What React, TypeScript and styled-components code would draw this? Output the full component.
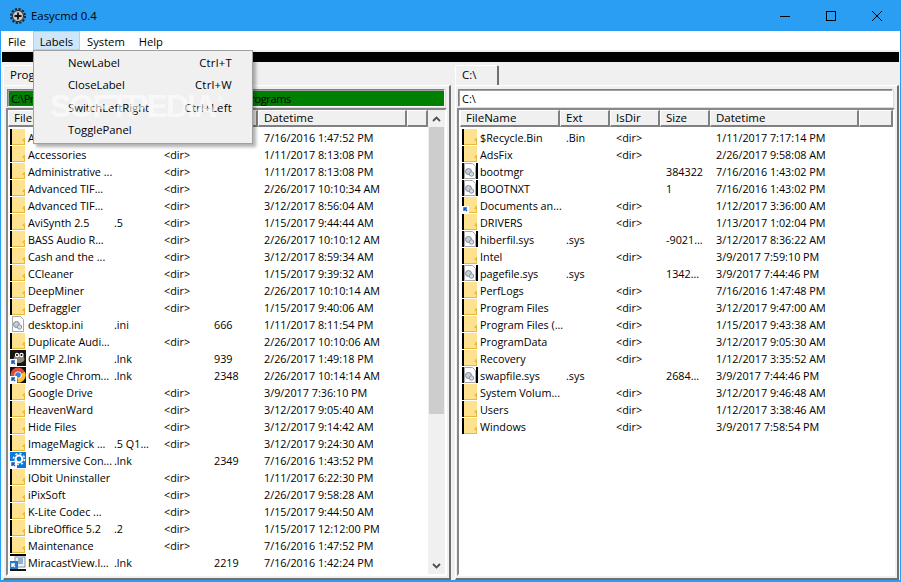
import React from "react";
import styled, { createGlobalStyle } from "styled-components";

const Global = createGlobalStyle`
  html, body { margin: 0; padding: 0; background: #f0f0f0; }
  body { width: 901px; height: 582px; overflow: hidden; font-family: "Open Sans", "Noto Sans", sans-serif; }
  #root { width: 901px; height: 582px; }
`;

const Win = styled.div`
  position: relative;
  box-sizing: border-box;
  width: 901px;
  height: 582px;
  border: 1px solid #2a9ef2;
  border-top: 0;
  border-bottom-width: 2px;
  background: #f0f0f0;
  display: flex;
  flex-direction: column;
  color: #000;
  font-size: 11px;
  overflow: hidden;
`;
const TitleBar = styled.div`
  height: 31px;
  flex: none;
  background: #2a9ef2;
  display: flex;
  align-items: center;
  padding-left: 9px;
  font-size: 11.4px;
`;
const TitleText = styled.span`
  margin-left: 5px;
  color: #000;
`;
const Controls = styled.div`
  margin-left: auto;
  display: flex;
  height: 100%;
`;
const Ctrl = styled.div`
  width: 46px;
  height: 31px;
  display: flex;
  align-items: center;
  justify-content: center;
`;
const MenuBar = styled.div`
  height: 19px;
  flex: none;
  background: #fff;
  display: flex;
  font-size: 11.2px;
  margin-bottom: 2px;
`;
const MenuItem = styled.div<{ $on?: boolean }>`
  box-sizing: border-box;
  height: 19px;
  padding: 0 6px;
  line-height: 19px;
  border: 1px solid ${(p) => (p.$on ? "#a8d3f2" : "transparent")};
  background: ${(p) => (p.$on ? "#cde6f9" : "transparent")};
`;
const BlackBar = styled.div`
  height: 10px;
  flex: none;
  background: #000;
  margin: 0 1px;
`;
const Body = styled.div`
  flex: 1;
  min-height: 0;
  display: flex;
  padding-right: 1px;
`;
const Panel = styled.div<{ $w: number; $padL: number }>`
  width: ${(p) => p.$w}px;
  flex: none;
  box-sizing: border-box;
  display: flex;
  flex-direction: column;
  padding: 3px 0 0 ${(p) => p.$padL}px;
`;
const Tab = styled.div`
  box-sizing: border-box;
  flex: none;
  height: 20px;
  width: 44px;
  padding: 1px 0 0 6px;
  line-height: 16px;
  border-top: 1px solid #fff;
  border-left: 1px solid #fff;
  border-right: 2px solid #707070;
  border-radius: 2px 2px 0 0;
  font-size: 11.5px;
  white-space: nowrap;
  overflow: hidden;
`;
const Page = styled.div<{ $padL: number }>`
  flex: 1;
  min-height: 0;
  box-sizing: border-box;
  border-top: 1px solid #fff;
  border-left: 1px solid #fff;
  border-right: 2px solid #707070;
  border-bottom: 2px solid #707070;
  padding: 3px 2px 2px ${(p) => p.$padL}px;
  display: flex;
  flex-direction: column;
`;
const PathWrap = styled.div`
  box-sizing: border-box;
  height: 18px;
  flex: none;
  margin: 0 2px 0 1px;
  border: 1px solid;
  border-color: #808080 #fff #fff #808080;
  box-shadow: 1px 1px 0 #dcdcdc;
`;
const PathBox = styled.div<{ $green?: boolean }>`
  box-sizing: border-box;
  height: 16px;
  padding-left: 2px;
  line-height: 15px;
  font-size: 11px;
  letter-spacing: ${(p) => (p.$green ? "-0.4px" : "0")};
  background: ${(p) => (p.$green ? "#008000" : "#fff")};
  border: 1px solid #a0a0a0;
  border-width: 1px 0 0 1px;
  white-space: nowrap;
  overflow: hidden;
`;
const ListBox = styled.div`
  flex: 1;
  min-height: 0;
  margin-top: 1px;
  box-sizing: border-box;
  border-style: solid;
  border-width: 2px;
  border-color: #888 #fff #fff #888;
  background: #fff;
  display: flex;
`;
const ListMain = styled.div<{ $inset: number }>`
  flex: 1;
  min-width: 0;
  display: flex;
  flex-direction: column;
  overflow: hidden;
  padding-left: ${(p) => p.$inset}px;
`;
const Header = styled.div<{ $cols: string }>`
  display: grid;
  grid-template-columns: ${(p) => p.$cols};
  height: 17px;
  flex: none;
`;
const HeadCell = styled.div`
  box-sizing: border-box;
  background: #f0f0f0;
  border-right: 2px solid #808080;
  border-bottom: 2px solid #808080;
  border-top: 1px solid #fff;
  border-left: 1px solid #fff;
  padding-left: 5px;
  line-height: 14px;
  font-size: 11.5px;
  white-space: nowrap;
  overflow: hidden;
`;
const Rows = styled.div`
  padding: 2px 0 0 2px;
`;
const Row = styled.div<{ $cols: string }>`
  display: grid;
  grid-template-columns: ${(p) => p.$cols};
  height: 17px;
  line-height: 17px;
  white-space: nowrap;
  font-size: 10.8px;
`;
const Name = styled.div`
  display: flex;
  align-items: flex-start;
  gap: 2px;
`;
const Cell = styled.div`
  padding-left: 6px;
`;
const ScrollBar = styled.div`
  width: 17px;
  flex: none;
  background: #f0f0f0;
  display: flex;
  flex-direction: column;
`;
const ScrollArrow = styled.div`
  height: 17px;
  flex: none;
  display: flex;
  align-items: center;
  justify-content: center;
`;
const ScrollTrack = styled.div`
  flex: 1;
`;
const Thumb = styled.div`
  height: 287px;
  margin: 0 1px;
  background: #cdcdcd;
`;
const Dropdown = styled.div`
  position: absolute;
  left: 32px;
  top: 50px;
  width: 220px;
  height: 94px;
  box-sizing: border-box;
  background: #f0f0f0;
  border: 1px solid #a0a0a0;
  box-shadow: 3px 3px 3px rgba(0, 0, 0, 0.3);
  padding: 1px 0;
  z-index: 3;
  font-size: 11.3px;
`;
const DropItem = styled.div`
  height: 22.3px;
  line-height: 22px;
  display: flex;
  justify-content: space-between;
  padding: 0 20px 0 34px;
`;
const Shortcut2 = styled.span`
  letter-spacing: 0.25px;
`;
const Watermark = styled.div`
  position: absolute;
  left: 49px;
  top: 88px;
  font-size: 32px;
  font-weight: 700;
  letter-spacing: -2px;
  color: rgba(255, 255, 255, 0.6);
  z-index: 4;
  font-family: "Liberation Sans", sans-serif;
`;
const Reg = styled.sup`
  font-size: 9px;
  letter-spacing: 0;
  vertical-align: 14px;
  line-height: 0;
  margin-left: 2px;
`;

type Kind = "folder" | "file" | "fileGear" | "gimp" | "chrome" | "gear" | "docs" | "cast";

const FolderBody = () => (
  <>
    <rect x="0" y="0" width="2" height="16" fill="#000" />
    <rect x="2" y="0" width="13" height="15" fill="#fee28f" />
    <rect x="2" y="15" width="13" height="1" fill="#eab93c" />
    <rect x="14" y="9" width="1" height="6" fill="#eab93c" />
    <path d="M12 12l2-3v3z" fill="#eab93c" />
  </>
);
const Svg = styled.svg`
  flex: none;
  display: block;
`;
const FileIco = ({ gearOnly }: { gearOnly?: boolean }) => (
  <Svg width="16" height="17" viewBox="0 0 16 17">
    {!gearOnly && <rect x="0" y="0" width="2" height="16" fill="#000" />}
    {!gearOnly && <rect x="14" y="0" width="2" height="16" fill="#000" />}
    <path d="M2.5 .5h8l3 3v12h-11z" fill="#fff" stroke="#a8a8a8" />
    <circle cx="6.5" cy="8.5" r="3" fill="#c4ccd6" stroke="#7d8894" />
    <circle cx="9.5" cy="11" r="2.2" fill="#d8dde4" stroke="#8a95a0" />
  </Svg>
);
const Shortcut = () => (
  <>
    <rect x="0" y="9" width="7" height="7" fill="#fff" />
    <path d="M2 14v-3h3M2 11l3 3" stroke="#1c57b8" strokeWidth="1.5" fill="none" />
  </>
);
const Icon = ({ kind }: { kind: Kind }) => {
  if (kind === "folder")
    return (
      <Svg width="16" height="17" viewBox="0 0 16 17">
        <FolderBody />
      </Svg>
    );
  if (kind === "file") return <FileIco />;
  if (kind === "fileGear") return <FileIco gearOnly />;
  if (kind === "docs")
    return (
      <Svg width="16" height="17" viewBox="0 0 16 17">
        <FolderBody />
        <Shortcut />
      </Svg>
    );
  if (kind === "gimp")
    return (
      <Svg width="16" height="17" viewBox="0 0 16 17">
        <rect width="16" height="16" fill="#141414" />
        <ellipse cx="9" cy="9" rx="5.5" ry="4" fill="#8c8c80" />
        <circle cx="7" cy="5" r="2.2" fill="#fff" />
        <circle cx="11.5" cy="5" r="2.2" fill="#fff" />
        <circle cx="7" cy="5" r="1" fill="#000" />
        <circle cx="11.5" cy="5" r="1" fill="#000" />
        <Shortcut />
      </Svg>
    );
  if (kind === "chrome")
    return (
      <Svg width="16" height="17" viewBox="0 0 16 17">
        <rect width="16" height="16" fill="#111" />
        <circle cx="8" cy="8" r="7.5" fill="#de4b39" />
        <path d="M8 8L1.5 11.8A7.5 7.5 0 0 0 8 15.5z" fill="#3cab4a" />
        <path d="M8 8v7.5A7.5 7.5 0 0 0 15 5z" fill="#fbc02d" />
        <circle cx="8" cy="8" r="3.6" fill="#fff" />
        <circle cx="8" cy="8" r="2.8" fill="#3d7fe0" />
        <Shortcut />
      </Svg>
    );
  if (kind === "cast")
    return (
      <Svg width="16" height="17" viewBox="0 0 16 17">
        <rect width="16" height="2" fill="#000" />
        <rect y="15" width="16" height="2" fill="#111" />
        <rect y="2" width="16" height="13" fill="#fff" />
        <rect x="5" y="3" width="10" height="10" fill="#eef2f6" stroke="#7f93a8" />
        <path d="M8 5h5M8 7h5M8 9h5" stroke="#3b6ea8" />
        <rect x="0" y="7" width="8" height="8" fill="#2a78c8" />
        <path d="M2 13v-3h3M2 10l3 3" stroke="#fff" strokeWidth="1.5" fill="none" />
      </Svg>
    );
  return (
    <Svg width="16" height="17" viewBox="0 0 16 17">
      <rect width="16" height="16" fill="#0a78d7" />
      <circle cx="9" cy="7" r="3.4" fill="none" stroke="#fff" strokeWidth="2" />
      <circle cx="9" cy="7" r="5.5" fill="none" stroke="#fff" strokeWidth="1.6" strokeDasharray="2 2.3" />
      <Shortcut />
    </Svg>
  );
};

type R = [string, string, string, string, string, Kind?];
const left: R[] = [
  ["A", "", "<dir>", "", "7/16/2016 1:47:52 PM"],
  ["Accessories", "", "<dir>", "", "1/11/2017 8:13:08 PM"],
  ["Administrative ...", "", "<dir>", "", "1/11/2017 8:13:08 PM"],
  ["Advanced TIF...", "", "<dir>", "", "2/26/2017 10:10:34 AM"],
  ["Advanced TIF...", "", "<dir>", "", "3/12/2017 8:56:04 AM"],
  ["AviSynth 2.5", ".5", "<dir>", "", "1/15/2017 9:44:44 AM"],
  ["BASS Audio R...", "", "<dir>", "", "2/26/2017 10:10:12 AM"],
  ["Cash and the ...", "", "<dir>", "", "3/12/2017 8:59:34 AM"],
  ["CCleaner", "", "<dir>", "", "1/15/2017 9:39:32 AM"],
  ["DeepMiner", "", "<dir>", "", "2/26/2017 10:10:14 AM"],
  ["Defraggler", "", "<dir>", "", "1/15/2017 9:40:06 AM"],
  ["desktop.ini", ".ini", "", "666", "1/11/2017 8:11:54 PM", "fileGear"],
  ["Duplicate Audi...", "", "<dir>", "", "2/26/2017 10:10:06 AM"],
  ["GIMP 2.lnk", ".lnk", "", "939", "2/26/2017 1:49:18 PM", "gimp"],
  ["Google Chrom...", ".lnk", "", "2348", "2/26/2017 10:14:14 AM", "chrome"],
  ["Google Drive", "", "<dir>", "", "3/9/2017 7:36:10 PM"],
  ["HeavenWard", "", "<dir>", "", "3/12/2017 9:05:40 AM"],
  ["Hide Files", "", "<dir>", "", "3/12/2017 9:14:42 AM"],
  ["ImageMagick ...", ".5 Q1...", "<dir>", "", "3/12/2017 9:24:30 AM"],
  ["Immersive Con...", ".lnk", "", "2349", "7/16/2016 1:43:52 PM", "gear"],
  ["IObit Uninstaller", "", "<dir>", "", "1/11/2017 6:22:30 PM"],
  ["iPixSoft", "", "<dir>", "", "2/26/2017 9:58:28 AM"],
  ["K-Lite Codec ...", "", "<dir>", "", "1/15/2017 9:44:50 AM"],
  ["LibreOffice 5.2", ".2", "<dir>", "", "1/15/2017 12:12:00 PM"],
  ["Maintenance", "", "<dir>", "", "7/16/2016 1:47:52 PM"],
  ["MiracastView.l...", ".lnk", "", "2219", "7/16/2016 1:42:24 PM", "cast"],
];
const right: R[] = [
  ["$Recycle.Bin", ".Bin", "<dir>", "", "1/11/2017 7:17:14 PM"],
  ["AdsFix", "", "<dir>", "", "2/26/2017 9:58:08 AM"],
  ["bootmgr", "", "", "384322", "7/16/2016 1:43:02 PM", "file"],
  ["BOOTNXT", "", "", "1", "7/16/2016 1:43:02 PM", "file"],
  ["Documents an...", "", "<dir>", "", "1/12/2017 3:36:00 AM", "docs"],
  ["DRIVERS", "", "<dir>", "", "1/13/2017 1:02:04 PM"],
  ["hiberfil.sys", ".sys", "", "-9021...", "3/12/2017 8:36:22 AM", "file"],
  ["Intel", "", "<dir>", "", "3/9/2017 7:59:10 PM"],
  ["pagefile.sys", ".sys", "", "1342...", "3/9/2017 7:44:46 PM", "file"],
  ["PerfLogs", "", "<dir>", "", "7/16/2016 1:47:48 PM"],
  ["Program Files", "", "<dir>", "", "3/12/2017 9:47:00 AM"],
  ["Program Files (...", "", "<dir>", "", "1/15/2017 9:43:38 AM"],
  ["ProgramData", "", "<dir>", "", "3/12/2017 9:05:30 AM"],
  ["Recovery", "", "<dir>", "", "1/12/2017 3:35:52 AM"],
  ["swapfile.sys", ".sys", "", "2684...", "3/9/2017 7:44:46 PM", "file"],
  ["System Volum...", "", "<dir>", "", "3/12/2017 9:46:48 AM"],
  ["Users", "", "<dir>", "", "1/12/2017 3:38:46 AM"],
  ["Windows", "", "<dir>", "", "3/9/2017 7:58:54 PM"],
];

const cols = "100px 50px 50px 50px 149px 1fr";
const rowCols = "98px 50px 50px 50px 149px";

const List = ({ rows, scroll, inset }: { rows: R[]; scroll?: boolean; inset: number }) => (
  <ListBox>
    <ListMain $inset={inset}>
      <Header $cols={cols}>
        {["FileName", "Ext", "IsDir", "Size", "Datetime", ""].map((h, i) => (
          <HeadCell key={i}>{h}</HeadCell>
        ))}
      </Header>
      <Rows>
        {rows.map((r, i) => (
          <Row key={i} $cols={rowCols}>
            <Name>
              <Icon kind={r[5] ?? "folder"} />
              <span>{r[0]}</span>
            </Name>
            <Cell>{r[1]}</Cell>
            <Cell>{r[2]}</Cell>
            <Cell>{r[3]}</Cell>
            <Cell>{r[4]}</Cell>
          </Row>
        ))}
      </Rows>
    </ListMain>
    {scroll && (
      <ScrollBar>
        <ScrollArrow>
          <svg width="9" height="6" viewBox="0 0 9 6">
            <path d="M1 5l3.5-3.5L8 5" fill="none" stroke="#505050" strokeWidth="1.8" />
          </svg>
        </ScrollArrow>
        <ScrollTrack>
          <Thumb />
        </ScrollTrack>
        <ScrollArrow>
          <svg width="9" height="6" viewBox="0 0 9 6">
            <path d="M1 1l3.5 3.5L8 1" fill="none" stroke="#505050" strokeWidth="1.8" />
          </svg>
        </ScrollArrow>
      </ScrollBar>
    )}
  </ListBox>
);

export default function App() {
  return (
    <>
      <Global />
      <Win>
        <TitleBar>
          <svg width="16" height="16" viewBox="0 0 16 16">
            <circle cx="8" cy="8" r="7" fill="none" stroke="#222" strokeWidth="2" strokeDasharray="2.2 1.5" />
            <circle cx="8" cy="8" r="5.5" fill="#c8c8c8" stroke="#222" />
            <path d="M8 4.5v7M4.5 8h7" stroke="#111" strokeWidth="1.8" />
          </svg>
          <TitleText>Easycmd 0.4</TitleText>
          <Controls>
            <Ctrl>
              <svg width="10" height="10"><path d="M0 5.5h10" stroke="#000" /></svg>
            </Ctrl>
            <Ctrl>
              <svg width="10" height="10"><rect x=".5" y=".5" width="9" height="9" fill="none" stroke="#000" /></svg>
            </Ctrl>
            <Ctrl>
              <svg width="10" height="10"><path d="M0 0l10 10M10 0L0 10" stroke="#000" /></svg>
            </Ctrl>
          </Controls>
        </TitleBar>
        <MenuBar>
          <MenuItem>File</MenuItem>
          <MenuItem $on>Labels</MenuItem>
          <MenuItem>System</MenuItem>
          <MenuItem>Help</MenuItem>
        </MenuBar>
        <BlackBar />
        <Body>
          <Panel $w={450} $padL={2}>
            <Tab>Prog</Tab>
            <Page $padL={2}>
              <PathWrap>
                <PathBox $green>C:\ProgramData\Microsoft\Windows\Start Menu\Programs</PathBox>
              </PathWrap>
              <List rows={left} scroll inset={0} />
            </Page>
          </Panel>
          <Panel $w={448} $padL={4}>
            <Tab>C:\</Tab>
            <Page $padL={1}>
              <PathWrap>
                <PathBox>C:\</PathBox>
              </PathWrap>
              <List rows={right} inset={1} />
            </Page>
          </Panel>
        </Body>
        <Dropdown>
          <DropItem><span>NewLabel</span><Shortcut2>Ctrl+T</Shortcut2></DropItem>
          <DropItem><span>CloseLabel</span><Shortcut2>Ctrl+W</Shortcut2></DropItem>
          <DropItem><span>SwitchLeftRight</span><Shortcut2>Ctrl+Left</Shortcut2></DropItem>
          <DropItem><span>TogglePanel</span></DropItem>
        </Dropdown>
        <Watermark>SOFTPEDIA<Reg>®</Reg></Watermark>
      </Win>
    </>
  );
}
